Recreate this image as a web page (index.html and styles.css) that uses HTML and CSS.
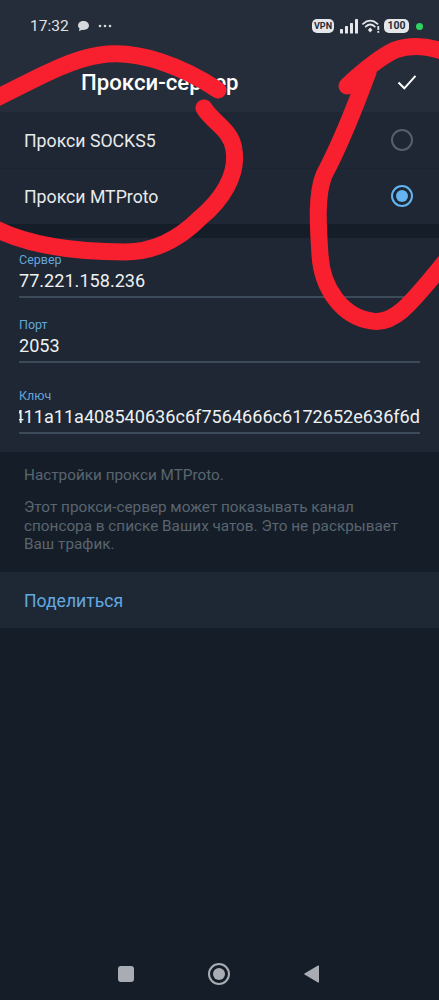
FILE: index.html
```html
<!DOCTYPE html>
<html lang="ru">
<head>
<meta charset="utf-8">
<title>Прокси-сервер</title>
<link rel="stylesheet" href="styles.css">
</head>
<body>
<div class="screen">
  <header class="top">
    <div class="status">
      <div class="status-left">
        <span class="time">17:32</span>
        <svg class="bubble" width="13" height="12" viewBox="0 0 13 12"><path d="M6.500 1C9.600 1 12 3 12 5.600S9.600 10 6.500 10c-.6 0-1.100-.1-1.600-.2L2 11.200l.5-2.700C1.500 7.700 1 6.700 1 5.600 1 3 3.400 1 6.500 1z" fill="#d5d8dc"/></svg>
        <svg class="dots" width="14" height="4" viewBox="0 0 14 4"><circle cx="2" cy="2" r="1.300" fill="#d5d8dc"/><circle cx="7" cy="2" r="1.300" fill="#d5d8dc"/><circle cx="12" cy="2" r="1.300" fill="#d5d8dc"/></svg>
      </div>
      <div class="status-right">
        <span class="vpn">VPN</span>
        <svg class="signal" width="18" height="15" viewBox="0 0 18 15"><rect x="0" y="10" width="3" height="4.500" rx=".6" fill="#e4e6e9"/><rect x="5" y="7" width="3" height="7.500" rx=".6" fill="#e4e6e9"/><rect x="10" y="4" width="3" height="10.500" rx=".6" fill="#e4e6e9"/><rect x="15" y="0" width="3" height="14.500" rx=".6" fill="#e4e6e9"/></svg>
        <svg class="wifi" width="18" height="14" viewBox="0 0 18 14"><g fill="none" stroke="#e4e6e9" stroke-width="1.800" stroke-linecap="round"><path d="M1 4.800C5.500 .7 11 .7 15.500 4.800"/><path d="M3.700 7.600C6.600 5 9.900 5 12.800 7.600"/></g><path d="M8.200 8.600l2.300 2.500-2.300 2.500-2.300-2.500z" fill="#e4e6e9"/><rect x="15.400" y="7" width="1.800" height="4" fill="#e4e6e9"/><rect x="15.400" y="12" width="1.800" height="1.800" fill="#e4e6e9"/></svg>
        <span class="battery">100</span>
        <span class="dot"></span>
      </div>
    </div>
    <div class="toolbar">
      <svg class="back" width="18" height="20" viewBox="0 0 18 20"><path d="M17 10H2M10 2l-8 8 8 8" fill="none" stroke="#fff" stroke-width="2"/></svg>
      <h1 class="title">Прокси-сервер</h1>
      <svg class="check" width="20" height="16" viewBox="0 0 20 16"><path d="M1.500 8.500l5.800 5.800L18.500 1.800" fill="none" stroke="#fff" stroke-width="2"/></svg>
    </div>
  </header>

  <section class="panel types">
    <div class="type-row">
      <span class="type-name">Прокси SOCKS5</span>
      <span class="radio"></span>
    </div>
    <div class="type-row type-row-next">
      <span class="type-name">Прокси MTProto</span>
      <span class="radio radio-on"></span>
    </div>
  </section>

  <section class="panel fields">
    <div class="field">
      <label class="field-label">Сервер</label>
      <div class="field-value">77.221.158.236</div>
    </div>
    <div class="field field-port">
      <label class="field-label">Порт</label>
      <div class="field-value">2053</div>
    </div>
    <div class="field field-secret">
      <label class="field-label">Ключ</label>
      <div class="field-value field-key"><span>dd4411a11a408540636c6f7564666c6172652e636f6d</span></div>
    </div>
  </section>

  <section class="info">
    <p class="info-text">Настройки прокси MTProto.</p>
    <p class="info-text">Этот прокси-сервер может показывать канал спонсора в списке Ваших чатов. Это не раскрывает Ваш трафик.</p>
  </section>

  <section class="panel share">
    <span class="share-link">Поделиться</span>
  </section>

  <nav class="navbar">
    <span class="nav-square"></span>
    <span class="nav-circle"><span class="nav-core"></span></span>
    <svg class="nav-back" width="17" height="20" viewBox="0 0 17 20"><path d="M15 1.500 1.500 9.500a.6.6 0 0 0 0 1L15 18.500c.6.300 1 0 1-.6V2.100c0-.6-.4-.9-1-.6z" fill="#a9adb3"/></svg>
  </nav>

  <svg class="scribble" width="439" height="1000" viewBox="0 0 439 1000">
    <g fill="none" stroke="#f8202e" stroke-width="17" stroke-linecap="round" stroke-linejoin="round">
      <path d="M-10 101C25 85 65 60 100 55C140 49 185 68 218 90"/>
      <path d="M204 108C212 122 232 130 234 150C238 175 222 200 200 218C180 238 155 252 125 252C85 252 30 248 -10 226"/>
      <path d="M347 86C362 72 378 58 395 50C412 44 428 46 445 52"/>
      <path d="M368 72C354 110 340 145 324 175C316 195 318 225 320 255C322 288 342 317 372 321C395 325 412 302 445 262"/>
    </g>
  </svg>
</div>
</body>
</html>
```
FILE: styles.css
```css
* {
  box-sizing: border-box;
}

html,
body {
  margin: 0;
  padding: 0;
}

body {
  font-family: Roboto, "Liberation Sans", sans-serif;
  background: #151e28;
  color: #fff;
}

.screen {
  position: relative;
  width: 439px;
  height: 1000px;
  overflow: hidden;
  display: flex;
  flex-direction: column;
  background: #151e28;
}

.top {
  height: 112px;
  background: #252d3a;
  flex-shrink: 0;
}

.status {
  height: 52px;
  padding: 0 16px 0 30px;
  display: flex;
  justify-content: space-between;
  align-items: center;
}

.status-left,
.status-right {
  display: flex;
  align-items: center;
}

.time {
  font-size: 15.500px;
  color: #e0e3e6;
}

.bubble {
  margin-left: 8px;
}

.dots {
  margin-left: 8px;
}

.vpn {
  width: 22px;
  height: 14px;
  border-radius: 5px;
  background: #e4e6e9;
  color: #252d3a;
  font-size: 9px;
  font-weight: 700;
  line-height: 14px;
  text-align: center;
}

.signal {
  margin-left: 6px;
}

.wifi {
  margin-left: 4px;
}

.battery {
  width: 25px;
  height: 14px;
  margin-left: 4px;
  border-radius: 5px;
  background: #e4e6e9;
  color: #252d3a;
  font-size: 10.500px;
  font-weight: 700;
  line-height: 14px;
  text-align: center;
}

.dot {
  width: 7px;
  height: 7px;
  margin-left: 7px;
  border-radius: 50%;
  background: #2fd35f;
}

.toolbar {
  height: 60px;
  padding: 0 22px 0 20px;
  display: flex;
  align-items: center;
}

.back {
  flex-shrink: 0;
}

.title {
  flex: 1;
  margin: 0 0 0 43px;
  font-size: 22.200px;
  font-weight: 500;
  line-height: 24px;
}

.panel {
  background: #1e2733;
  flex-shrink: 0;
}

.types {
  height: 112px;
}

.type-row {
  height: 56px;
  padding: 0 26px 0 24px;
  display: flex;
  justify-content: space-between;
  align-items: center;
}

.type-row-next {
  box-shadow: inset 0 1px 0 #1b2430;
}

.type-name {
  margin-top: 1px;
  font-size: 17.700px;
  color: #e8eaec;
}

.radio {
  width: 22px;
  height: 22px;
  border: 2px solid #56606b;
  border-radius: 50%;
}

.radio-on {
  border-color: #63b4f0;
  position: relative;
}

.radio-on::after {
  content: "";
  position: absolute;
  inset: 3px;
  border-radius: 50%;
  background: #63b4f0;
}

.fields {
  height: 214px;
  margin-top: 14px;
  padding: 14px 19px 0;
  display: flex;
  flex-direction: column;
}

.field {
  height: 46px;
  border-bottom: 2px solid #3c4a5a;
  display: flex;
  flex-direction: column;
}

.field-port {
  margin-top: 19px;
}

.field-secret {
  margin-top: 25px;
}

.field-label {
  font-size: 12.500px;
  line-height: 15px;
  color: #63a6dc;
}

.field-value {
  margin-top: 3px;
  font-size: 18.100px;
  line-height: 22px;
  color: #eef0f2;
}

.field-key {
  display: flex;
  justify-content: flex-end;
  overflow: hidden;
  white-space: nowrap;
}

.field-key span {
  flex-shrink: 0;
}

.info {
  height: 120px;
  padding: 14px 24px 0;
  flex-shrink: 0;
}

.info-text {
  margin: 0 0 13.500px;
  font-size: 15.300px;
  line-height: 18.500px;
  color: #5a6570;
}

.share {
  height: 56px;
  padding: 2px 24px 0;
  display: flex;
  align-items: center;
  background: #1e2835;
}

.share-link {
  font-size: 17.600px;
  color: #63a9e2;
}

.navbar {
  position: absolute;
  left: 0;
  right: 0;
  bottom: 0;
  height: 50px;
  padding: 0 119px 3px 118px;
  display: flex;
  justify-content: space-between;
  align-items: center;
  background: #151e28;
}

.nav-square {
  width: 16px;
  height: 16px;
  border-radius: 3px;
  background: #a9adb3;
}

.nav-circle {
  width: 22px;
  height: 22px;
  border: 2px solid #a9adb3;
  border-radius: 50%;
  display: flex;
  align-items: center;
  justify-content: center;
}

.nav-core {
  width: 12px;
  height: 12px;
  border-radius: 50%;
  background: #a9adb3;
}

.scribble {
  position: absolute;
  left: 0;
  top: 0;
  pointer-events: none;
}
```
